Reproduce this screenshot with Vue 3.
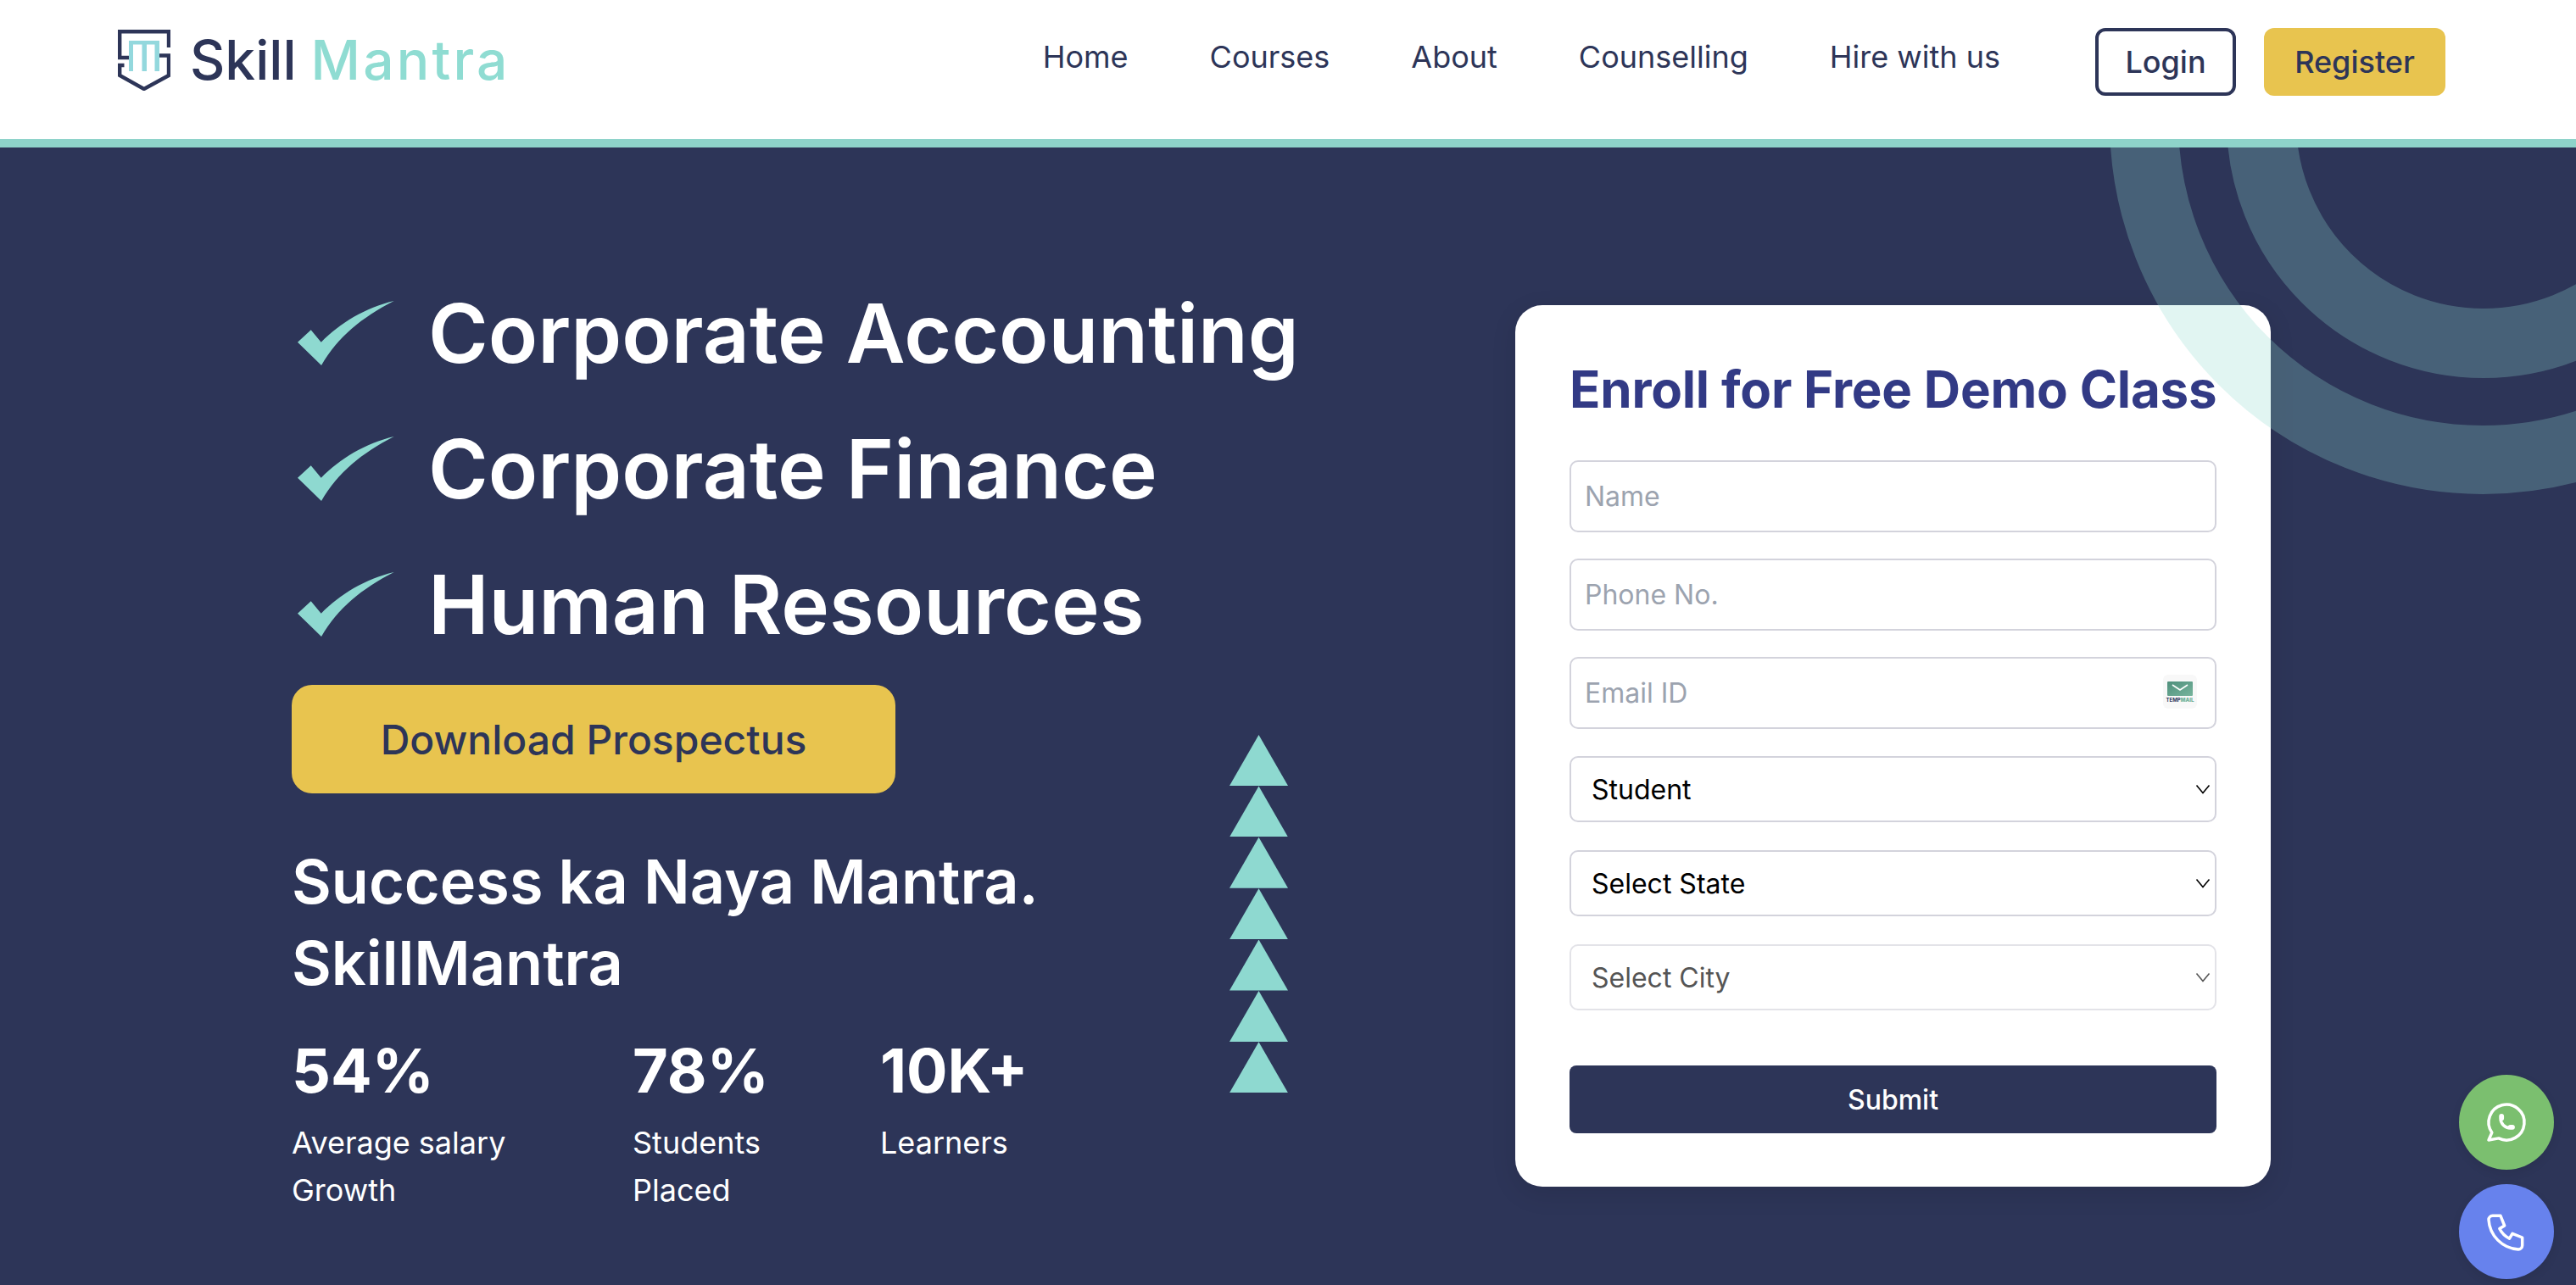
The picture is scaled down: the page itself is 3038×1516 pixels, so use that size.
<template>
  <div class="page">
    <header class="topbar">
      <a class="logo" href="#">
        <svg class="logo-mark" viewBox="0 0 62 72" fill="none">
          <path d="M60 21V2.2H2.2V33H13" stroke="#2d3558" stroke-width="4.4" />
          <path d="M45 30.5H60V54L30.8 70L2.2 54V42H7.5" stroke="#2d3558" stroke-width="4.4" />
          <path d="M13 49V13H49V49H43.5V17.6H34V49H28.5V17.6H18V49Z" fill="#93d8dd" />
        </svg>
        <span class="logo-text">Skill <em>Mantra</em></span>
      </a>

      <nav class="nav">
        <a v-for="link in links" :key="link" href="#">{{ link }}</a>
      </nav>

      <div class="auth">
        <button class="login">Login</button>
        <button class="register">Register</button>
      </div>
    </header>

    <main class="hero">
      <div class="rings">
        <span class="ring ring-outer"></span>
        <span class="ring ring-inner"></span>
      </div>

      <section class="intro">
        <div v-for="item in courses" :key="item" class="course">
          <svg class="check" viewBox="0 0 114 76">
            <path d="M113.7 0C75 20 48 42 28 76L0 48.7L15.7 34.3L27.7 48.7C50 26 80 8 113.7 0Z" fill="#8ed9d0" />
          </svg>
          <h2>{{ item }}</h2>
        </div>

        <button class="prospectus">Download Prospectus</button>

        <p class="tagline">Success ka Naya Mantra.<br />SkillMantra</p>

        <div class="stats">
          <div v-for="stat in stats" :key="stat.value" class="stat" :style="{ width: stat.width + 'px' }">
            <strong>{{ stat.value }}</strong>
            <span v-for="line in stat.lines" :key="line">{{ line }}</span>
          </div>
        </div>
      </section>

      <div class="triangles">
        <i v-for="n in 7" :key="n"></i>
      </div>

      <form class="card" @submit.prevent>
        <h1>Enroll for Free Demo Class</h1>

        <div class="inputs">
          <input type="text" placeholder="Name" />
          <input type="text" placeholder="Phone No." />
          <div class="field">
            <input type="email" placeholder="Email ID" />
            <div class="tempmail">
              <svg viewBox="0 0 30 17">
                <defs>
                  <linearGradient id="mailfill" x1="0" y1="0" x2="1" y2="1">
                    <stop offset="0" stop-color="#4f8f7c" />
                    <stop offset="1" stop-color="#76b49c" />
                  </linearGradient>
                </defs>
                <rect width="30" height="17" rx="1" fill="url(#mailfill)" />
                <path d="M6 4L15 10L24 4" fill="none" stroke="#fff" stroke-width="1.6" />
              </svg>
              <span>TEMP<b>MAIL</b></span>
            </div>
          </div>
        </div>

        <div class="selects">
          <div v-for="sel in selects" :key="sel.label" class="select-wrap">
            <select :disabled="sel.disabled">
              <option>{{ sel.label }}</option>
            </select>
            <svg class="chevron" :class="{ muted: sel.disabled }" viewBox="0 0 18 12" fill="none">
              <path d="M1.5 1.5L9 10.5L16.5 1.5" stroke="currentColor" stroke-width="1.6" />
            </svg>
          </div>
        </div>

        <button class="submit" type="submit">Submit</button>
      </form>
    </main>

    <div class="floats">
      <a class="float whatsapp" href="#">
        <svg viewBox="0 0 24 24" fill="none" stroke="#fff" stroke-width="1.5" stroke-linecap="round" stroke-linejoin="round">
          <path d="M3 21l1.65-3.8a9 9 0 1 1 3.4 2.9l-5.05.9" />
          <path d="M9 10a.5.5 0 0 0 1 0V9a.5.5 0 0 0-1 0v1a5 5 0 0 0 5 5h1a.5.5 0 0 0 0-1h-1a.5.5 0 0 0 0 1" />
        </svg>
      </a>
      <a class="float phone" href="#">
        <svg viewBox="0 0 24 24" fill="none" stroke="#fff" stroke-width="1.5" stroke-linecap="round" stroke-linejoin="round">
          <path d="M5 4h4l2 5l-2.5 1.5a11 11 0 0 0 5 5l1.5-2.5l5 2v4a2 2 0 0 1-2 2a16 16 0 0 1-15-15a2 2 0 0 1 2-2" />
        </svg>
      </a>
    </div>
  </div>
</template>

<script setup>
const links = ["Home", "Courses", "About", "Counselling", "Hire with us"];

const courses = ["Corporate Accounting", "Corporate Finance", "Human Resources"];

const stats = [
  { value: "54%", lines: ["Average salary", "Growth"], width: 402 },
  { value: "78%", lines: ["Students", "Placed"], width: 292 },
  { value: "10K+", lines: ["Learners"], width: 300 },
];

const selects = [
  { label: "Student", disabled: false },
  { label: "Select State", disabled: false },
  { label: "Select City", disabled: true },
];
</script>

<style scoped>
.page {
  position: relative;
  height: 1516px;
  overflow: hidden;
  font-family: Inter, "Liberation Sans", sans-serif;
  color: #2d3558;
}

.topbar {
  display: flex;
  align-items: flex-start;
  height: 164px;
  box-sizing: border-box;
  padding: 33px 154px 0 139px;
  background: #fff;
}

.logo {
  display: flex;
  align-items: center;
  gap: 23px;
  margin-top: 2px;
  text-decoration: none;
}

.logo-mark {
  width: 62px;
  height: 72px;
}

.logo-text {
  font-size: 64px;
  font-weight: 500;
  line-height: 70px;
  color: #2d3558;
  white-space: nowrap;
}

.logo-text em {
  font-style: normal;
  letter-spacing: 3.2px;
  color: #8fdcd2;
}

.nav {
  display: flex;
  gap: 96px;
  margin-left: auto;
  margin-top: 12px;
}

.nav a {
  font-size: 36px;
  line-height: 44px;
  color: #2d3558;
  text-decoration: none;
}

.auth {
  display: flex;
  gap: 33px;
  margin-left: 112px;
}

.auth button {
  height: 80px;
  box-sizing: border-box;
  border-radius: 12px;
  font-family: inherit;
  font-size: 36px;
  font-weight: 500;
  color: #2d3558;
}

.login {
  width: 166px;
  background: #fff;
  border: 4px solid #2d3558;
}

.register {
  width: 214px;
  background: #e8c44f;
  border: none;
}

.hero {
  position: relative;
  display: flex;
  align-items: flex-start;
  height: 1352px;
  box-sizing: border-box;
  padding: 139px 0 0 344px;
  border-top: 10px solid #8ed3ca;
  background: #2d3558;
  overflow: hidden;
}

.rings {
  position: absolute;
  inset: 0;
  z-index: 2;
  pointer-events: none;
}

.ring {
  position: absolute;
  box-sizing: border-box;
  border-radius: 50%;
  border-style: solid;
  border-color: rgba(143, 217, 208, 0.27);
}

.ring-outer {
  left: 2488px;
  top: -471px;
  width: 880px;
  height: 880px;
  border-width: 81px;
}

.ring-inner {
  left: 2626px;
  top: -334px;
  width: 606px;
  height: 606px;
  border-width: 82px;
}

.intro {
  width: 1106px;
  flex-shrink: 0;
  color: #fff;
}

.course {
  display: flex;
  align-items: center;
  height: 160px;
  padding-left: 7px;
}

.check {
  width: 114px;
  height: 76px;
  margin-right: 40px;
  flex-shrink: 0;
}

.course h2 {
  margin: 0;
  font-size: 96px;
  font-weight: 600;
  line-height: 116px;
  white-space: nowrap;
}

.prospectus {
  display: block;
  width: 712px;
  height: 128px;
  margin-top: 15px;
  border: none;
  border-radius: 24px;
  background: #e8c44f;
  font-family: inherit;
  font-size: 48px;
  font-weight: 500;
  color: #2d3558;
}

.tagline {
  margin: 56px 0 0;
  font-size: 72px;
  font-weight: 600;
  line-height: 96px;
}

.stats {
  display: flex;
  margin-top: 31px;
}

.stat strong {
  display: block;
  margin-bottom: 9px;
  font-size: 72px;
  font-weight: 700;
  line-height: 96px;
}

.stat span {
  display: block;
  font-size: 36px;
  line-height: 56px;
}

.triangles {
  display: flex;
  flex-direction: column;
  gap: 0.4px;
  flex-shrink: 0;
  margin-top: 554px;
}

.triangles i {
  display: block;
  width: 69px;
  height: 60px;
  background: #8ed9d0;
  clip-path: polygon(50% 0, 100% 100%, 0 100%);
}

.card {
  width: 891px;
  height: 1040px;
  box-sizing: border-box;
  flex-shrink: 0;
  margin: 47px 0 0 268px;
  padding: 63px 64px;
  border-radius: 32px;
  background: #fff;
  box-shadow: 0 8px 30px rgba(0, 0, 0, 0.1);
}

.card h1 {
  margin: 0 0 48px;
  font-size: 60px;
  font-weight: 700;
  letter-spacing: -0.2px;
  line-height: 72px;
  color: #323a85;
  white-space: nowrap;
}

.inputs {
  display: flex;
  flex-direction: column;
  gap: 31px;
}

.inputs input {
  display: block;
  width: 100%;
  height: 85px;
  box-sizing: border-box;
  padding: 0 16px;
  border: 2px solid #d3d3dc;
  border-radius: 10px;
  outline: none;
  background: #fff;
  font-family: inherit;
  font-size: 32px;
  color: #2d3558;
}

.inputs input::placeholder {
  color: #9ca3af;
}

.field {
  position: relative;
}

.tempmail {
  position: absolute;
  right: 23px;
  top: 21px;
  display: flex;
  flex-direction: column;
  align-items: center;
  width: 40px;
  height: 40px;
  padding-top: 8px;
  box-sizing: border-box;
  border-radius: 6px;
  background: #f8f8f8;
}

.tempmail svg {
  display: block;
  width: 30px;
  height: 17px;
}

.tempmail span {
  margin-top: 1px;
  font-size: 6px;
  line-height: 7px;
  font-weight: 700;
  color: #2d3558;
  white-space: nowrap;
}

.tempmail b {
  color: #76b49c;
}

.selects {
  display: flex;
  flex-direction: column;
  gap: 33px;
  margin-top: 32px;
}

.select-wrap {
  position: relative;
}

.select-wrap select {
  display: block;
  width: 100%;
  height: 78px;
  box-sizing: border-box;
  padding: 0 24px;
  border: 2px solid #d3d3dc;
  border-radius: 10px;
  outline: none;
  appearance: none;
  background: #fff;
  font-family: inherit;
  font-size: 32px;
  color: #000;
  opacity: 1;
}

.select-wrap select:disabled {
  border-color: #e3e3e8;
  color: #555;
}

.chevron {
  position: absolute;
  right: 7px;
  top: 33px;
  width: 18px;
  height: 12px;
  color: #000;
}

.chevron.muted {
  color: #555;
}

.submit {
  display: block;
  width: 100%;
  height: 80px;
  margin-top: 65px;
  border: none;
  border-radius: 8px;
  background: #2d3558;
  font-family: inherit;
  font-size: 32px;
  font-weight: 500;
  color: #fff;
}

.floats {
  position: absolute;
  right: 26px;
  top: 1268px;
  z-index: 3;
  display: flex;
  flex-direction: column;
  gap: 17px;
}

.float {
  display: flex;
  align-items: center;
  justify-content: center;
  width: 112px;
  height: 112px;
  border-radius: 50%;
  box-shadow: 0 4px 12px rgba(0, 0, 0, 0.08);
}

.float svg {
  width: 56px;
  height: 56px;
}

.whatsapp {
  background: #7bbf6f;
}

.phone {
  background: #6782ed;
}
</style>
